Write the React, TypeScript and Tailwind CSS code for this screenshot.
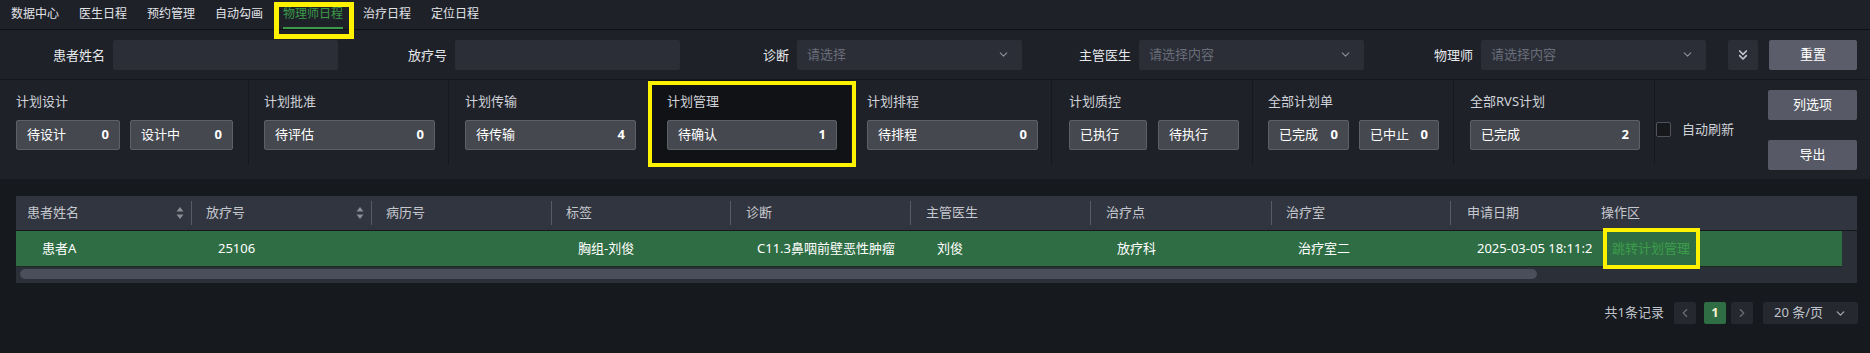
import React from 'react';
import { ChevronDown, ChevronsDown, ChevronLeft, ChevronRight } from 'lucide-react';

const navItems = ['数据中心', '医生日程', '预约管理', '自动勾画', '物理师日程', '治疗日程', '定位日程'];

const SortIcon = () => (
  <svg width="8" height="14" viewBox="0 0 8 14" className="mr-[7px]">
    <path d="M4 1 L7.5 5.5 H0.5 Z" fill="#8a8e96" />
    <path d="M4 13 L7.5 8.5 H0.5 Z" fill="#8a8e96" />
  </svg>
);

const Field = ({ label, placeholder, select }: { label: string; placeholder?: string; select?: boolean }) => (
  <div className="flex items-center w-[342px]">
    <span className="w-[105px] text-right text-[13px] text-[#e6e8ec] leading-[30px]">{label}</span>
    <div className="ml-[8px] w-[225px] h-[30px] rounded-[2px] bg-[#2b2e37] flex items-center justify-between pl-[10px] pr-[12px]">
      <span className="text-[13px] text-[#686d77]">{placeholder}</span>
      {select && <ChevronDown size={13} strokeWidth={2} className="text-[#8c9099]" />}
    </div>
  </div>
);

const StatBox = ({ label, num, className }: { label: string; num?: string; className: string }) => (
  <div className={`h-[30px] rounded-[2px] bg-[#45484f] border border-[#5d6067] flex items-center justify-between px-[10px] ${className}`}>
    <span className="text-[13px] text-white">{label}</span>
    {num && <span className="text-[13px] font-bold text-white">{num}</span>}
  </div>
);

const StatGroup = ({ title, className, children }: { title: string; className: string; children: React.ReactNode }) => (
  <div className={`h-[85px] pt-[11px] border-r border-[#17191d] ${className}`}>
    <div className="text-[13px] leading-[20px] text-[#d0d3d9]">{title}</div>
    <div className="mt-[9px] flex">{children}</div>
  </div>
);

const columns = [
  { title: '患者姓名', w: 'w-[176px]', sort: true, cell: '患者A', pl: 'pl-[11px]' },
  { title: '放疗号', w: 'w-[180px]', sort: true, cell: '25106', pl: 'pl-[14px]' },
  { title: '病历号', w: 'w-[180px]', cell: '', pl: 'pl-[14px]' },
  { title: '标签', w: 'w-[179px]', cell: '胸组-刘俊', pl: 'pl-[14px]' },
  { title: '诊断', w: 'w-[180px]', cell: 'C11.3鼻咽前壁恶性肿瘤', pl: 'pl-[15px]' },
  { title: '主管医生', w: 'w-[180px]', cell: '刘俊', pl: 'pl-[15px]' },
  { title: '治疗点', w: 'w-[181px]', cell: '放疗科', pl: 'pl-[15px]' },
  { title: '治疗室', w: 'w-[179px]', cell: '治疗室二', pl: 'pl-[14px]' },
  { title: '申请日期', w: 'w-[141px]', cell: '2025-03-05 18:11:25', pl: 'pl-[16px]', noDiv: true },
];

export default function App() {
  return (
    <div className="w-[1870px] h-[353px] bg-[#16191d] overflow-hidden font-['Noto_Sans','Noto_Sans_CJK_SC',sans-serif]">
      {/* top nav */}
      <nav className="h-[30px] bg-[#1e2128] border-b border-[#0f1114] flex pl-[11px] gap-[20px]">
        {navItems.map((n) => {
          const active = n === '物理师日程';
          return (
            <div key={n} className="relative h-full">
              <div className={`h-full flex items-center text-[12px] border-b-2 ${active ? 'text-[#3c9a4a] border-[#3c9a4a]' : 'text-[#e2e4e8] border-transparent'}`}>
                {n}
              </div>
              {active && <span className="absolute -left-[9px] -right-[11px] top-[2px] h-[37px] border-[5px] border-[#fff200]" />}
            </div>
          );
        })}
      </nav>

      {/* filters */}
      <div className="bg-[#1e2128] h-[50px] flex items-center border-b border-[#16181c]">
        <Field label="患者姓名" />
        <Field label="放疗号" />
        <Field label="诊断" placeholder="请选择" select />
        <Field label="主管医生" placeholder="请选择内容" select />
        <Field label="物理师" placeholder="请选择内容" select />
        <div className="ml-[18px] w-[30px] h-[30px] rounded-[2px] bg-[#2b2e37] flex items-center justify-center">
          <ChevronsDown size={16} strokeWidth={2.5} className="text-[#c0c4cc]" />
        </div>
        <button className="ml-[11px] w-[88px] h-[30px] rounded-[2px] bg-[#5b5e6a] text-[13px] text-white">重置</button>
      </div>

      {/* stats */}
      <div className="bg-[#1e2128] h-[99px] flex items-start">
        <StatGroup title="计划设计" className="w-[249px] pl-[16px]">
          <StatBox label="待设计" num="0" className="w-[104px]" />
          <StatBox label="设计中" num="0" className="w-[103px] ml-[10px]" />
        </StatGroup>
        <StatGroup title="计划批准" className="w-[200px] pl-[15px]">
          <StatBox label="待评估" num="0" className="w-[171px]" />
        </StatGroup>
        <StatGroup title="计划传输" className="w-[200px] pl-[16px]">
          <StatBox label="待传输" num="4" className="w-[171px]" />
        </StatGroup>
        <div className="relative">
          <StatGroup title="计划管理" className="w-[202px] pl-[18px] bg-[#111216] border-[#111216]">
            <StatBox label="待确认" num="1" className="w-[170px]" />
          </StatGroup>
          <span className="absolute -left-[1px] -right-[5px] top-[1px] -bottom-[2px] border-[4px] border-[#fff200]" />
        </div>
        <StatGroup title="计划排程" className="w-[201px] pl-[16px]">
          <StatBox label="待排程" num="0" className="w-[171px]" />
        </StatGroup>
        <StatGroup title="计划质控" className="w-[201px] pl-[17px]">
          <StatBox label="已执行" className="w-[78px]" />
          <StatBox label="待执行" className="w-[81px] ml-[11px]" />
        </StatGroup>
        <StatGroup title="全部计划单" className="w-[201px] pl-[15px]">
          <StatBox label="已完成" num="0" className="w-[81px]" />
          <StatBox label="已中止" num="0" className="w-[80px] ml-[10px]" />
        </StatGroup>
        <StatGroup title="全部RVS计划" className="w-[201px] pl-[16px]">
          <StatBox label="已完成" num="2" className="w-[170px]" />
        </StatGroup>
        <div className="flex-1 h-[99px] flex items-center">
          <span className="ml-[1px] w-[15px] h-[15px] rounded-[2px] bg-[#16181c] border border-[#50535b]" />
          <span className="ml-[11px] text-[13px] text-[#d0d3d9]">自动刷新</span>
        </div>
        <div className="pt-[10px] pr-[13px] flex flex-col gap-[20px]">
          <button className="w-[89px] h-[30px] rounded-[2px] bg-[#575a66] text-[13px] text-white">列选项</button>
          <button className="w-[89px] h-[30px] rounded-[2px] bg-[#575a66] text-[13px] text-white">导出</button>
        </div>
      </div>

      {/* table */}
      <div className="mt-[17px] ml-[16px] mr-[13px]">
        <div className="h-[35px] bg-[#31353f] border-b border-[#15171a] flex">
          {columns.map((c) => (
            <div key={c.title} className={`${c.w} ${c.pl} h-full flex items-center justify-between`}>
              <span className="text-[13px] text-[#c5c8ce]">{c.title}</span>
              <div className="flex items-center">
                {c.sort && <SortIcon />}
                {!c.noDiv && <span className="w-px h-[24px] bg-[#575b64]" />}
              </div>
            </div>
          ))}
          <div className="flex-1 h-full flex items-center pl-[9px]">
            <span className="text-[13px] text-[#c5c8ce]">操作区</span>
          </div>
        </div>
        <div className="flex bg-[#2b2f38]">
          <div className="w-[1826px] h-[36px] bg-[#2f6e44] border-b border-[#1d2a22] flex">
            {columns.map((c) => (
              <div key={c.title} className={`${c.w} h-full flex items-center pl-[26px] overflow-hidden whitespace-nowrap`}>
                <span className="text-[13px] text-white">{c.cell}</span>
              </div>
            ))}
            <div className="flex-1 h-full flex items-center pl-[20px]">
              <span className="relative text-[13px] text-[#3d9c4c]">
                跳转计划管理
                <span className="absolute -left-[9px] -right-[10px] -top-[11px] -bottom-[11px] border-[4px] border-[#fff200]" />
              </span>
            </div>
          </div>
        </div>
        <div className="h-[16px] bg-[#2b2f38] pl-[4px] pt-[2px]">
          <div className="w-[1517px] h-[10px] rounded-full bg-[#4b4f5b]" />
        </div>
      </div>

      {/* pagination */}
      <div className="mt-[19px] pr-[12px] flex items-center justify-end">
        <span className="text-[13px] text-[#c0c4cc] mr-[10px]">共1条记录</span>
        <div className="w-[22px] h-[22px] rounded-[2px] bg-[#25282e] flex items-center justify-center">
          <ChevronLeft size={14} className="text-[#6a6e76]" />
        </div>
        <div className="ml-[8px] w-[22px] h-[22px] rounded-[2px] bg-[#2f6e44] flex items-center justify-center text-[13px] font-bold text-[#f2f0d0]">1</div>
        <div className="ml-[5px] w-[22px] h-[22px] rounded-[2px] bg-[#25282e] flex items-center justify-center">
          <ChevronRight size={14} className="text-[#6a6e76]" />
        </div>
        <div className="ml-[10px] w-[95px] h-[22px] rounded-[2px] bg-[#25282e] flex items-center justify-between pl-[11px] pr-[11px]">
          <span className="text-[13px] text-[#c0c4cc]">20 条/页</span>
          <ChevronDown size={13} strokeWidth={2.5} className="text-[#a0a4ac]" />
        </div>
      </div>
    </div>
  );
}
